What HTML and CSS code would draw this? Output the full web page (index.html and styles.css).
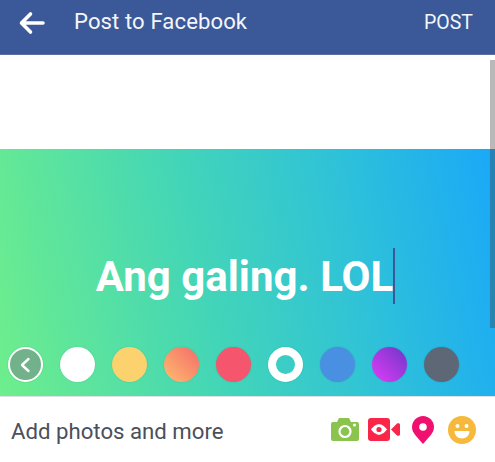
FILE: index.html
```html
<!DOCTYPE html>
<html lang="en">
<head>
<meta charset="utf-8">
<title>Post to Facebook</title>
<link rel="stylesheet" href="styles.css">
</head>
<body>
<div class="app">
  <header class="topbar">
    <svg class="back" viewBox="0 0 28 24" width="28" height="24"><path d="M25 12H4M12.500 3l-9 9 9 9" fill="none" stroke="#fff" stroke-width="3.600" stroke-linecap="round" stroke-linejoin="round"/></svg>
    <h1 class="title">Post to Facebook</h1>
    <span class="post">POST</span>
  </header>
  <main class="composer">
    <div class="blank"></div>
    <section class="canvas">
      <p class="message"><span>Ang galing. LOL</span><i class="caret"></i></p>
      <div class="swatches">
        <span class="swatch collapse"><svg viewBox="0 0 14 18" width="14" height="18"><path d="M10.500 3 4 9l6.500 6" fill="none" stroke="#fff" stroke-width="2.400" stroke-linecap="round" stroke-linejoin="round"/></svg></span>
        <span class="swatch white"></span>
        <span class="swatch yellow"></span>
        <span class="swatch orange"></span>
        <span class="swatch red"></span>
        <span class="swatch selected"></span>
        <span class="swatch blue"></span>
        <span class="swatch purple"></span>
        <span class="swatch slate"></span>
      </div>
    </section>
    <footer class="addbar">
      <span class="addtext">Add photos and more</span>
      <div class="icons">
        <svg class="ic-camera" viewBox="0 0 28 23" width="28" height="23"><path d="M2 4h4l2-4h10l2 4h6a2 2 0 0 1 2 2v15a2 2 0 0 1-2 2H2a2 2 0 0 1-2-2V6a2 2 0 0 1 2-2z" fill="#8bc34f"/><circle cx="14" cy="13.500" r="5.500" fill="none" stroke="#fff" stroke-width="2.200"/><circle cx="23.500" cy="7" r="1.500" fill="#fff"/></svg>
        <svg class="ic-video" viewBox="0 0 32 23" width="32" height="23"><rect width="22" height="23" rx="3" fill="#f9264a"/><path d="M23 11.500l6-6c1-.6 3 0 3 1v10c0 1-2 1.600-3 1z" fill="#f9264a"/><path d="M3 11.500C6 7.500 9 6.300 11 6.300s5 1.200 8 5.200c-3 4-6 5.200-8 5.200s-5-1.200-8-5.200z" fill="#fff"/><circle cx="11" cy="11.500" r="2.600" fill="#f9264a"/></svg>
        <svg class="ic-pin" viewBox="0 0 22 28" width="22" height="28"><path d="M11 0C5 0 0 5 0 11c0 3.500 1.500 6 4 9l7 8 7-8c2.500-3 4-5.500 4-9 0-6-5-11-11-11z" fill="#f0106f"/><circle cx="11" cy="11" r="3.800" fill="#fff"/></svg>
        <svg class="ic-smile" viewBox="0 0 28 28" width="28" height="28"><circle cx="14" cy="14" r="14" fill="#f6b93b"/><circle cx="9.500" cy="10" r="2" fill="#fff"/><circle cx="18.500" cy="10" r="2" fill="#fff"/><path d="M6.500 15h15c0 4.500-3.300 7.500-7.500 7.500S6.500 19.500 6.500 15z" fill="#fff"/></svg>
      </div>
    </footer>
  </main>
  <div class="scrollbar"></div>
</div>
</body>
</html>
```
FILE: styles.css
```css
html, body {
  margin: 0;
  padding: 0;
  background: #fff;
}
.app {
  position: relative;
  width: 495px;
  height: 462px;
  overflow: hidden;
  font-family: Roboto, "Liberation Sans", sans-serif;
  display: flex;
  flex-direction: column;
}
.topbar {
  height: 55px;
  flex: none;
  box-sizing: border-box;
  background: #3b5998;
  border-bottom: 1px solid #5a6f9f;
  color: #fff;
  display: flex;
  align-items: center;
  padding: 0 22px 9px 18px;
}
.back {
  flex: none;
}
.title {
  margin: 0 0 3px 28px;
  font-size: 22.100px;
  font-weight: 400;
  letter-spacing: .1px;
  flex: 1;
  color: #f4f6fa;
}
.post {
  font-size: 19.500px;
  color: #f4f6fa;
}
.composer {
  flex: 1;
  display: flex;
  flex-direction: column;
}
.blank {
  height: 94px;
  flex: none;
}
.canvas {
  height: 247px;
  flex: none;
  background: linear-gradient(78deg, #6eee8c 0%, #44d6b6 40%, #2fc2d8 70%, #1aa8f8 100%);
  display: flex;
  flex-direction: column;
  box-sizing: border-box;
  padding-top: 99px;
}
.message {
  margin: 0;
  height: 56px;
  padding-right: 4px;
  display: flex;
  justify-content: center;
  align-items: center;
  font-size: 42px;
  font-weight: 700;
  color: #fff;
}
.caret {
  width: 2px;
  height: 56px;
  background: #3b5998;
}
.swatches {
  margin-top: 43px;
  display: flex;
  gap: 17px;
  padding-left: 7.500px;
}
.swatch {
  width: 35px;
  height: 35px;
  border-radius: 50%;
  flex: none;
  box-sizing: border-box;
  box-shadow: 0 0 2px rgba(0, 0, 0, .12);
  display: flex;
  align-items: center;
  justify-content: center;
}
.collapse {
  background: rgba(120, 140, 135, .6);
  border: 2px solid #fff;
}
.white { background: #fff; }
.yellow { background: #fbd26d; }
.orange { background: linear-gradient(45deg, #fdbd70, #f56b68); }
.red { background: #f5556d; }
.selected { background: transparent; border: 8px solid #fff; }
.blue { background: #4a90e2; }
.purple { background: linear-gradient(45deg, #e23cf8, #6c37c8); }
.slate { background: #5e6776; }
.addbar {
  flex: 1;
  display: flex;
  align-items: center;
  justify-content: space-between;
  border-top: 1px solid #dde1e6;
  padding: 0 19px 0 11px;
}
.addtext {
  font-size: 22.200px;
  color: #4b4f5c;
  margin-top: 2px;
}
.icons {
  display: flex;
  align-items: center;
}
.ic-video { margin-left: 9px; }
.ic-pin { margin-left: 12px; }
.ic-smile { margin-left: 14px; }
.scrollbar {
  position: absolute;
  right: 0;
  top: 60px;
  width: 5px;
  height: 268px;
  background: rgba(60, 60, 60, .36);
}
```
